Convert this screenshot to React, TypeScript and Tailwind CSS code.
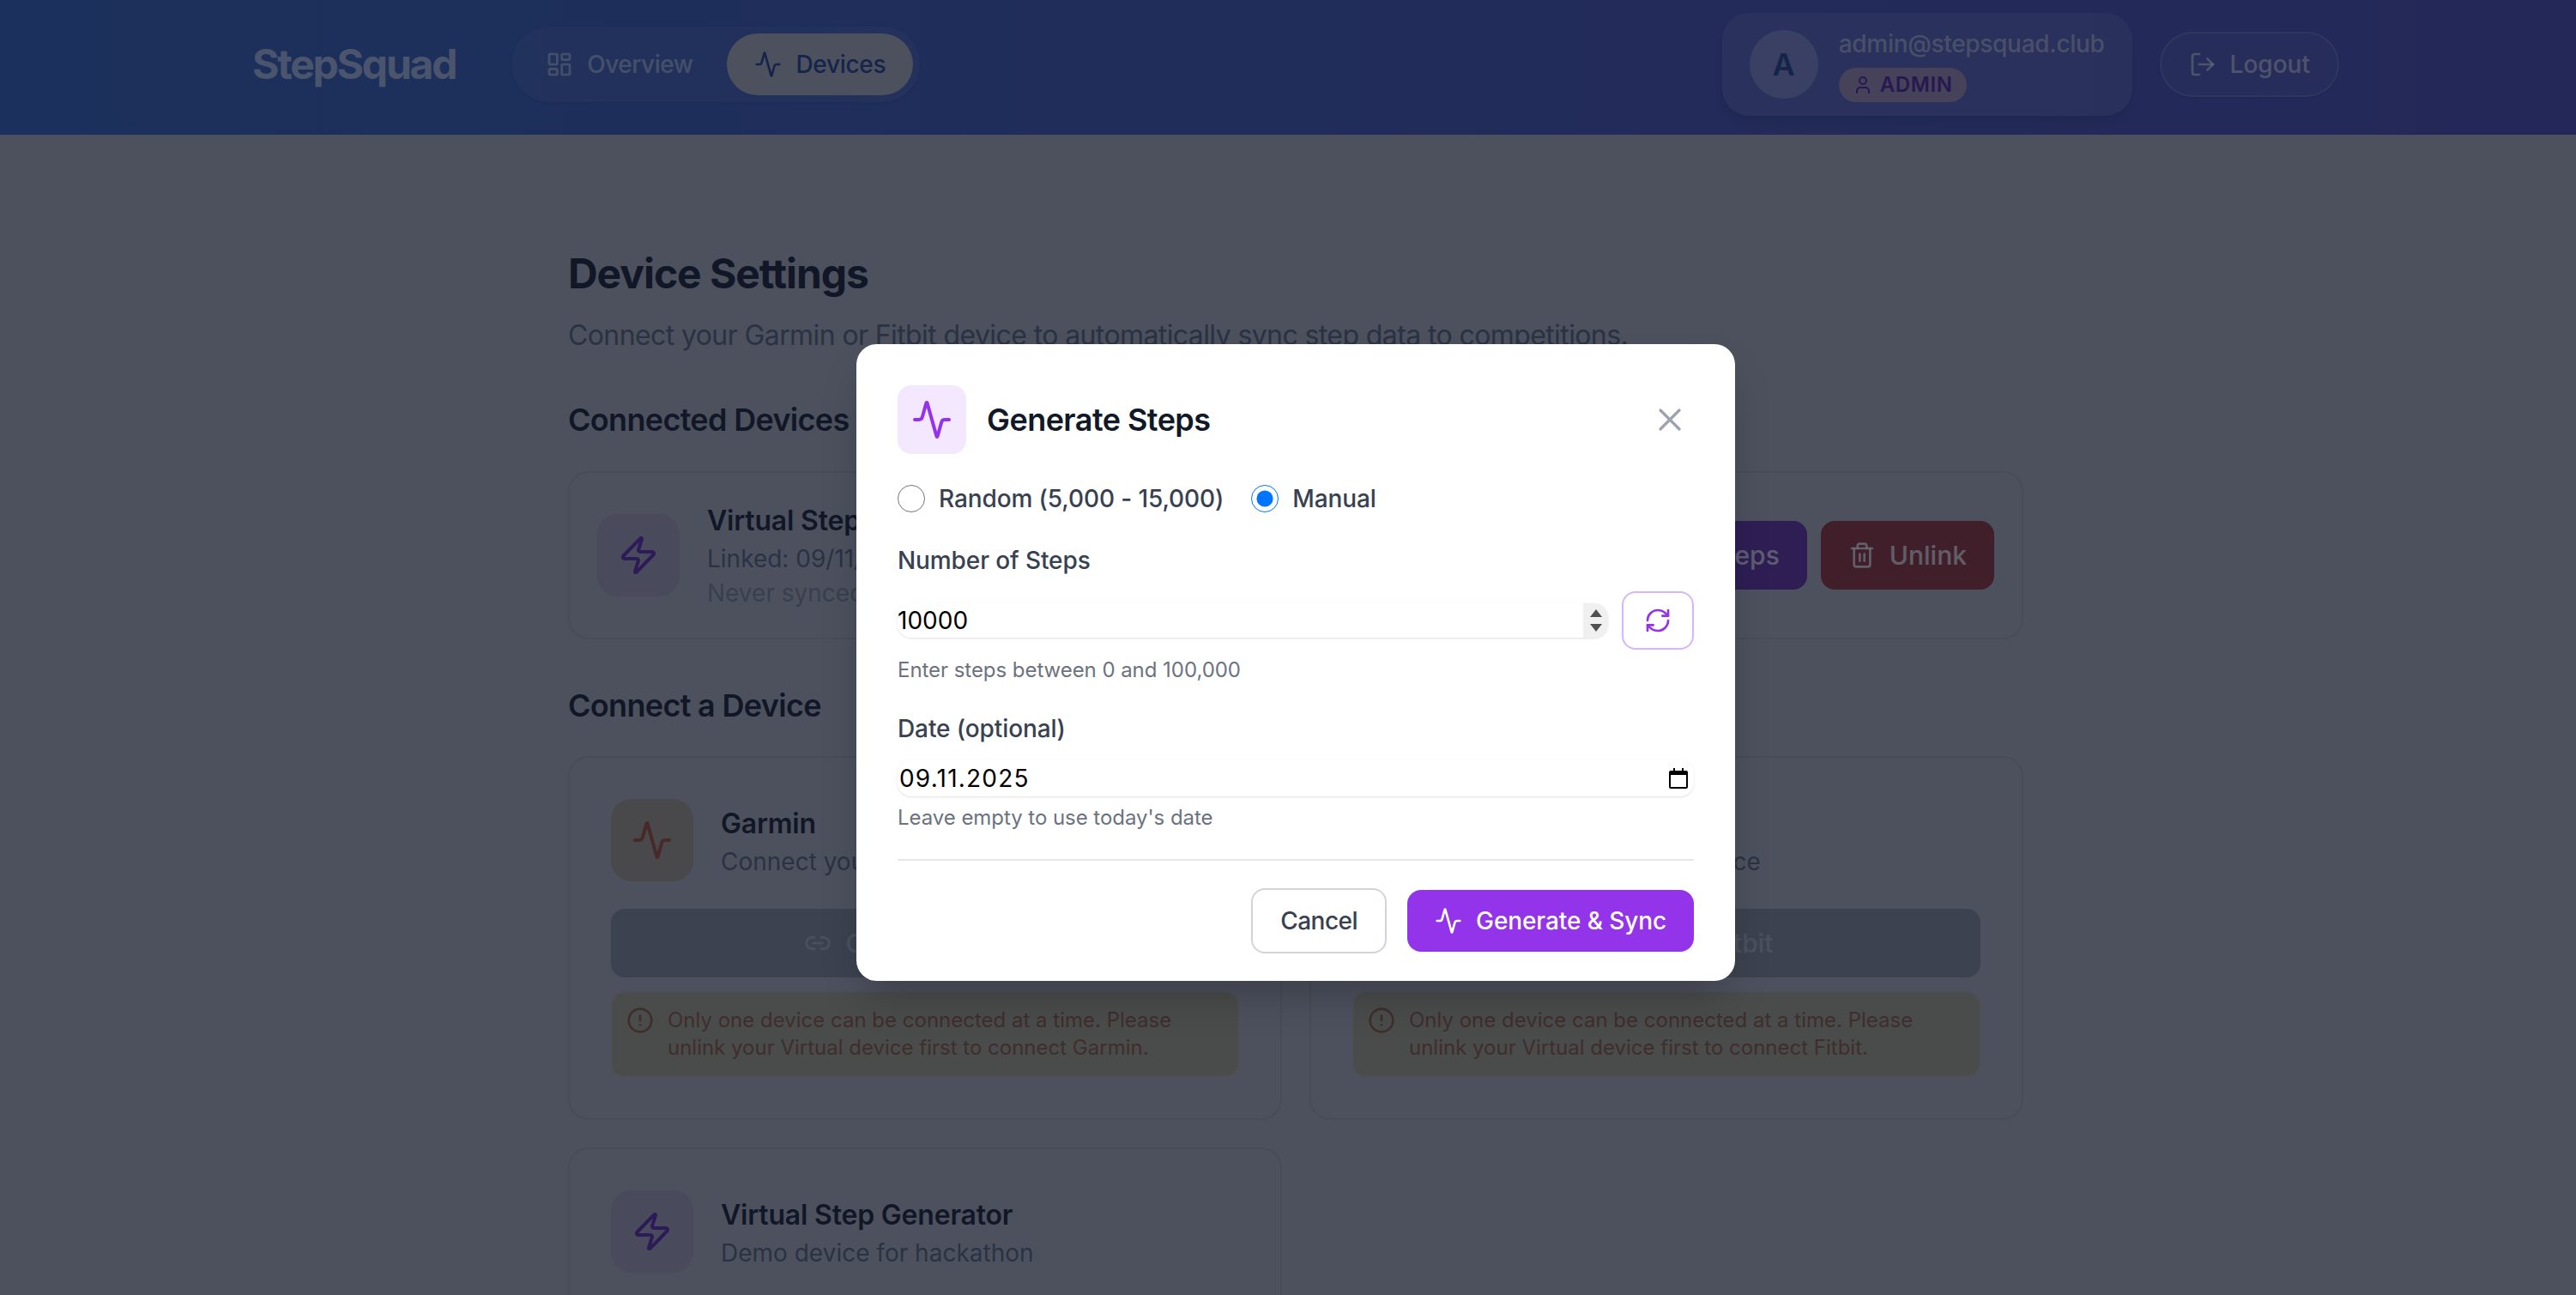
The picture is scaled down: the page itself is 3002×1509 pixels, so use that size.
import React from 'react';
import {
  Activity,
  CircleAlert,
  LayoutDashboard,
  Link2,
  LogOut,
  RefreshCw,
  Trash2,
  User,
  X,
  Zap,
} from 'lucide-react';

function Header() {
  return (
    <header className="h-[157px] bg-gradient-to-r from-[#2c5bb5] to-[#4545ab]">
      <div className="mx-auto flex h-[150px] max-w-[2560px] items-center justify-between px-16">
        <div className="flex items-center gap-16">
          <span className="text-5xl leading-[64px] font-bold tracking-[-2.2px] text-white/60">StepSquad</span>
          <nav className="ml-[1px] flex gap-2 rounded-full bg-white/5 p-2 shadow-sm">
            <a className="flex items-center gap-4 rounded-full px-8 py-4 text-[28px] leading-10 font-medium tracking-[-0.5px] text-white/50">
              <LayoutDashboard size={32} />
              <span>Overview</span>
            </a>
            <a className="flex items-center gap-4 rounded-full bg-[#b0b2b9] px-8 py-4 text-[28px] leading-10 font-medium tracking-[-0.3px] text-[#1e3a8a]">
              <Activity size={32} />
              <span>Devices</span>
            </a>
          </nav>
        </div>
        <div className="flex items-center gap-8">
          <div className="flex items-center gap-6 rounded-[32px] bg-white/10 px-8 py-4 shadow-lg">
            <div className="flex h-20 w-20 items-center justify-center rounded-full bg-white/25 text-4xl font-semibold text-[#1e3a8a]">
              A
            </div>
            <div className="flex flex-col gap-2">
              <span className="text-[28px] leading-10 font-medium tracking-[-0.3px] text-white/50">admin@stepsquad.club</span>
              <span className="flex h-10 w-fit items-center gap-2 rounded-full bg-[#9e8aae] px-4 text-2xl font-semibold tracking-wide text-[#4c1d95]">
                <User size={24} />
                ADMIN
              </span>
            </div>
          </div>
          <button className="flex items-center gap-4 rounded-full border-2 border-white/15 bg-white/5 px-8 py-4 text-[28px] leading-10 font-medium text-white/60 shadow-sm">
            <LogOut size={32} />
            <span>Logout</span>
          </button>
        </div>
      </div>
    </header>
  );
}

function DeviceCard({
  title,
  subtitle,
  iconBox,
  icon,
  children,
}: {
  title: string;
  subtitle: string;
  iconBox: string;
  icon: React.ReactNode;
  children?: React.ReactNode;
}) {
  return (
    <div className="rounded-3xl border-2 border-[#a4a6ac] bg-[#b2b4bb] p-12">
      <div className="flex items-center gap-8">
        <div className={`flex h-24 w-24 shrink-0 items-center justify-center rounded-3xl ${iconBox}`}>{icon}</div>
        <div className="pt-[2px]">
          <h3 className="text-[32px] leading-[48px] font-semibold tracking-[-0.2px] text-[#111827]">{title}</h3>
          <p className="text-[28px] leading-10 text-[#566074]">{subtitle}</p>
        </div>
      </div>
      {children}
    </div>
  );
}

function ConnectBlock({ name }: { name: string }) {
  return (
    <>
      <button className="mt-8 flex h-20 w-full items-center justify-center gap-4 rounded-2xl bg-[#898b95] text-[30px] font-medium text-[#aab1c2]">
        <Link2 size={32} />
        <span>Connect {name}</span>
      </button>
      <div className="mt-4 flex gap-4 rounded-2xl border-2 border-[#b0ad8e] bg-[#a8a587] p-4 text-2xl leading-8 text-[#8f5238]">
        <CircleAlert size={32} className="shrink-0" />
        <p>
          Only one device can be connected at a time. Please unlink your Virtual device first to connect {name}.
        </p>
      </div>
    </>
  );
}

function Page() {
  return (
    <main className="mx-auto max-w-[1792px] px-12 pt-[130px]">
      <h1 className="text-5xl leading-[64px] font-bold tracking-[-1.07px] text-[#111827]">Device Settings</h1>
      <p className="mt-4 text-[32px] leading-[48px] tracking-[-0.6px] text-[#566074]">
        Connect your Garmin or Fitbit device to automatically sync step data to competitions.
      </p>

      <h2 className="mt-[46px] text-4xl leading-[56px] font-semibold tracking-[-0.68px] text-[#111827]">Connected Devices</h2>
      <div className="mt-8 flex h-[196px] items-center justify-between rounded-3xl border-2 border-[#a4a6ac] bg-[#b2b4bb] px-8">
        <div className="flex items-center gap-8">
          <div className="flex h-24 w-24 items-center justify-center rounded-3xl bg-[#a89fb6]">
            <Zap size={48} className="text-[#5b21a6]" />
          </div>
          <div>
            <h3 className="text-[32px] leading-[48px] font-semibold tracking-[-0.2px] text-[#111827]">Virtual Step Generator</h3>
            <p className="text-[28px] leading-10 text-[#566074]">Linked: 09/11/2025</p>
            <p className="text-[28px] leading-10 text-[#7c8494]">Never synced</p>
          </div>
        </div>
        <div className="flex gap-4">
          <button className="flex h-20 items-center gap-4 rounded-2xl bg-[#5f2aa0] px-8 text-[30px] font-medium text-white/80">
            <Activity size={32} />
            <span>Generate Steps</span>
          </button>
          <button className="flex h-20 items-center gap-4 rounded-2xl bg-[#922c30] px-8 text-[30px] font-medium text-white/80">
            <Trash2 size={32} />
            <span>Unlink</span>
          </button>
        </div>
      </div>

      <h2 className="mt-[49px] text-4xl leading-[56px] font-semibold tracking-[-0.68px] text-[#111827]">Connect a Device</h2>
      <div className="mt-[31px] grid grid-cols-2 gap-8">
        <DeviceCard
          title="Garmin"
          subtitle="Connect your Garmin device"
          iconBox="bg-[#a89e8c]"
          icon={<Activity size={48} className="text-[#a8452e]" />}
        >
          <ConnectBlock name="Garmin" />
        </DeviceCard>
        <DeviceCard
          title="Fitbit"
          subtitle="Connect your Fitbit device"
          iconBox="bg-[#a89e8c]"
          icon={<Activity size={48} className="text-[#a8452e]" />}
        >
          <ConnectBlock name="Fitbit" />
        </DeviceCard>
        <DeviceCard
          title="Virtual Step Generator"
          subtitle="Demo device for hackathon"
          iconBox="bg-[#a89fb6]"
          icon={<Zap size={48} className="text-[#5b21a6]" />}
        />
      </div>
    </main>
  );
}

function GenerateModal() {
  return (
    <div className="absolute inset-0 flex items-center justify-center bg-[#111827]/[0.63]">
      <div className="w-[1024px] rounded-3xl bg-white px-12 pt-12 pb-8 shadow-2xl">
        <div className="flex items-center justify-between">
          <div className="flex items-center gap-6">
            <div className="flex h-20 w-20 items-center justify-center rounded-2xl bg-[#f3e8ff]">
              <Activity size={48} className="text-[#9333ea]" />
            </div>
            <h2 className="text-4xl leading-[56px] font-semibold tracking-[-0.55px] text-[#111827]">Generate Steps</h2>
          </div>
          <button className="p-[6px] text-[#9ca3af]">
            <X size={44} strokeWidth={1.75} />
          </button>
        </div>

        <div className="mt-8 flex items-center gap-8 text-[28px] leading-10 font-medium tracking-[-0.1px] text-[#374151]">
          <label className="flex items-center gap-4">
            <input type="radio" name="mode" className="h-8 w-8" readOnly />
            Random (5,000 - 15,000)
          </label>
          <label className="flex items-center gap-4">
            <input type="radio" name="mode" className="h-8 w-8" checked readOnly />
            Manual
          </label>
        </div>

        <label className="mt-8 block text-[28px] leading-10 font-medium tracking-[-0.1px] text-[#374151]">Number of Steps</label>
        <div className="mt-4 flex h-[68px] items-center gap-4">
          <div className="flex h-10 flex-1 items-stretch overflow-hidden rounded-2xl shadow-sm">
            <input
              className="min-w-0 flex-1 bg-white text-[28px] text-black outline-none"
              value="10000"
              readOnly
            />
            <div className="flex w-[29px] flex-col items-center justify-center gap-2 bg-[#f0f0f0]">
              <svg width="14" height="9" viewBox="0 0 14 9"><path d="M7 0l7 9H0z" fill="#505050" /></svg>
              <svg width="14" height="9" viewBox="0 0 14 9"><path d="M0 0h14L7 9z" fill="#505050" /></svg>
            </div>
          </div>
          <button className="flex h-[68px] w-[84px] items-center justify-center rounded-2xl border-2 border-[#d8b4fe] text-[#9333ea]">
            <RefreshCw size={32} />
          </button>
        </div>
        <p className="mt-2 text-2xl leading-8 tracking-[-0.05px] text-[#6b7280]">Enter steps between 0 and 100,000</p>

        <label className="mt-8 block text-[28px] leading-10 font-medium tracking-[-0.1px] text-[#374151]">Date (optional)</label>
        <div className="mt-4 flex h-[43px] items-center justify-between rounded-2xl bg-white pr-[7px] pl-[2px] shadow-sm">
          <span className="text-[28px] tracking-[1.2px] text-black">09.11.2025</span>
          <svg width="22" height="24" viewBox="0 0 22 24" fill="none">
            <path d="M5 0h2v3h8V0h2v3h3a2 2 0 0 1 2 2v17a2 2 0 0 1-2 2H2a2 2 0 0 1-2-2V5a2 2 0 0 1 2-2h3zM2 8v14h18V8z" fill="#000" />
          </svg>
        </div>
        <p className="mt-[9px] text-2xl leading-8 tracking-[-0.05px] text-[#6b7280]">Leave empty to use today's date</p>

        <div className="mt-8 flex flex-col gap-8">
          <div className="h-0.5 bg-[#e5e7eb]" />
          <div className="flex items-center justify-end gap-6">
            <button className="rounded-2xl border-2 border-[#d1d5db] px-8 py-4 text-[28px] leading-10 font-medium tracking-[-0.5px] text-[#374151]">
              Cancel
            </button>
            <button className="flex items-center gap-4 rounded-2xl bg-[#9333ea] px-8 py-4 text-[28px] leading-10 font-medium tracking-[-0.1px] text-white">
              <Activity size={32} />
              <span>Generate &amp; Sync</span>
            </button>
          </div>
        </div>
      </div>
    </div>
  );
}

export default function App() {
  return (
    <div className="h-[1509px] w-[3002px] overflow-hidden">
      <div className="relative h-[1544px] w-[3020px] overflow-hidden bg-[#b0b2b9] font-['Inter',sans-serif]">
        <Header />
        <Page />
        <GenerateModal />
      </div>
    </div>
  );
}
